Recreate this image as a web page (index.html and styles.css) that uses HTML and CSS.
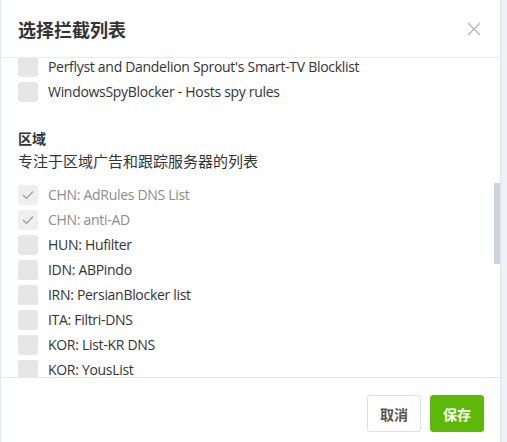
FILE: index.html
```html
<!DOCTYPE html>
<html lang="zh-CN">
<head>
<meta charset="utf-8">
<title>选择拦截列表</title>
<link rel="stylesheet" href="styles.css">
</head>
<body>
<div class="modal">
  <div class="modal-header">
    <h2 class="modal-title">选择拦截列表</h2>
    <span class="modal-close" aria-label="关闭">
      <svg width="14" height="14" viewBox="0 0 14 14"><path d="M1 1 L13 13 M13 1 L1 13" stroke="#b4b4b4" stroke-width="1.3" fill="none"/></svg>
    </span>
  </div>
  <div class="modal-body">
    <div class="scroll-content">
      <ul class="list">
        <li class="item"><span class="box"></span><span class="label">Perflyst and Dandelion Sprout's Smart-TV Blocklist</span></li>
        <li class="item"><span class="box"></span><span class="label">WindowsSpyBlocker - Hosts spy rules</span></li>
      </ul>
      <div class="section">
        <div class="section-title">区域</div>
        <div class="section-desc">专注于区域广告和跟踪服务器的列表</div>
      </div>
      <ul class="list">
        <li class="item checked"><span class="box"><svg width="12" height="10" viewBox="0 0 12 10"><path d="M1 5 L4.5 8.5 L11 1.5" stroke="#9a9a9a" stroke-width="1.2" fill="none"/></svg></span><span class="label">CHN: AdRules DNS List</span></li>
        <li class="item checked"><span class="box"><svg width="12" height="10" viewBox="0 0 12 10"><path d="M1 5 L4.5 8.5 L11 1.5" stroke="#9a9a9a" stroke-width="1.2" fill="none"/></svg></span><span class="label">CHN: anti-AD</span></li>
        <li class="item"><span class="box"></span><span class="label">HUN: Hufilter</span></li>
        <li class="item"><span class="box"></span><span class="label">IDN: ABPindo</span></li>
        <li class="item"><span class="box"></span><span class="label">IRN: PersianBlocker list</span></li>
        <li class="item"><span class="box"></span><span class="label">ITA: Filtri-DNS</span></li>
        <li class="item"><span class="box"></span><span class="label">KOR: List-KR DNS</span></li>
        <li class="item"><span class="box"></span><span class="label">KOR: YousList</span></li>
      </ul>
    </div>
    <div class="scroll-thumb"></div>
  </div>
  <div class="modal-footer">
    <button class="btn btn-default">取消</button>
    <button class="btn btn-primary">保存</button>
  </div>
</div>
</body>
</html>
```
FILE: styles.css
```css
html, body {
  margin: 0;
  padding: 0;
}
body {
  width: 507px;
  height: 442px;
  overflow: hidden;
  background: #eef1f6;
  font-family: "Open Sans", "Noto Sans CJK SC", sans-serif;
  font-size: 14px;
  color: #333;
}
.modal {
  width: 499px;
  height: 442px;
  background: #fff;
  border-left: 1px solid #e3e6ec;
  border-right: 1px solid #dfe3ea;
  display: flex;
  flex-direction: column;
}
.modal-header {
  height: 57px;
  flex: none;
  border-bottom: 1px solid #e8eaee;
  display: flex;
  align-items: center;
  justify-content: space-between;
  padding: 0 19px 0 17px;
}
.modal-title {
  margin: 0;
  font-family: "Noto Sans CJK SC", sans-serif;
  font-size: 18px;
  font-weight: 700;
  color: #333;
}
.modal-close {
  display: flex;
  margin-top: 1px;
}
.modal-body {
  position: relative;
  height: 319px;
  flex: none;
  overflow: hidden;
}
.scroll-content {
  margin-top: -1px;
  padding: 0 17px;
}
.list {
  list-style: none;
  margin: 0;
  padding: 0;
  display: flex;
  flex-direction: column;
  gap: 5px;
}
.item {
  display: flex;
  align-items: center;
  gap: 10px;
  height: 20px;
}
.box {
  width: 20px;
  height: 20px;
  border-radius: 3px;
  background: #e6e6e6;
  display: flex;
  align-items: center;
  justify-content: center;
  flex: none;
}
.checked .box {
  background: #efefef;
}
.label {
  line-height: 20px;
  white-space: nowrap;
  letter-spacing: -0.3px;
}
.checked .label {
  color: #8c8c8c;
}
.section {
  margin: 26px 0 14px;
}
.section-title {
  font-family: "Noto Sans CJK SC", sans-serif;
  font-weight: 700;
  line-height: 20px;
  color: #333;
}
.section-desc {
  font-family: "Noto Sans CJK SC", sans-serif;
  font-size: 15px;
  margin-top: 2px;
  line-height: 21px;
  color: #333;
}
.scroll-thumb {
  position: absolute;
  right: 0;
  top: 125px;
  width: 6px;
  height: 81px;
  background: #d0d4da;
}
.modal-footer {
  flex: none;
  border-top: 1px solid #e4e7ec;
  display: flex;
  justify-content: flex-end;
  gap: 9px;
  padding: 17px 16px 0 0;
}
.btn {
  height: 37px;
  padding: 0 12px;
  border-radius: 3px;
  font-family: "Noto Sans CJK SC", sans-serif;
  font-size: 14px;
  font-weight: 700;
  cursor: pointer;
}
.btn-default {
  background: #fff;
  border: 1px solid #dcdfe6;
  color: #555;
}
.btn-primary {
  background: #5cb90a;
  border: 1px solid #5cb90a;
  color: #fff;
}
```
